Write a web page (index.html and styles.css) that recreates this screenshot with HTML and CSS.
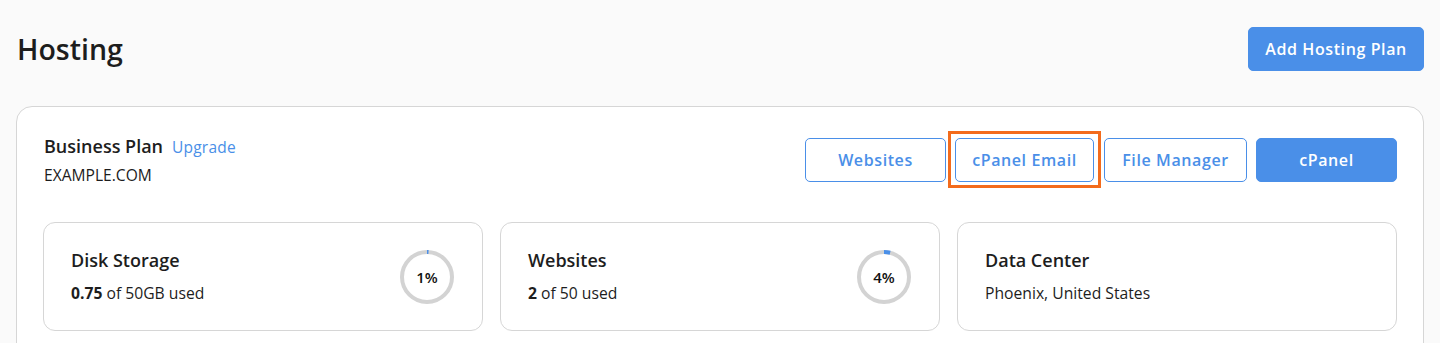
FILE: index.html
```html
<!DOCTYPE html>
<html>
<head>
<meta charset="utf-8">
<link rel="stylesheet" href="styles.css">
</head>
<body>
<div class="page">
  <header class="page-head">
    <h1 class="page-title">Hosting</h1>
    <button class="btn btn-solid btn-add">Add Hosting Plan</button>
  </header>
  <section class="plan-card">
    <div class="plan-top">
      <div class="plan-info">
        <div class="plan-name">Business Plan <a class="plan-upgrade">Upgrade</a></div>
        <div class="plan-domain">EXAMPLE.COM</div>
      </div>
      <div class="plan-actions">
        <button class="btn btn-outline btn-w141">Websites</button>
        <button class="btn btn-outline btn-w139 highlighted">cPanel Email</button>
        <button class="btn btn-outline btn-w143">File Manager</button>
        <button class="btn btn-solid btn-w141">cPanel</button>
      </div>
    </div>
    <div class="stats">
      <div class="stat">
        <div class="stat-text">
          <div class="stat-title">Disk Storage</div>
          <div class="stat-sub"><b>0.75</b> of 50GB used</div>
        </div>
        <div class="donut">
          <svg viewBox="0 0 54 54" width="54" height="54">
            <circle cx="27" cy="27" r="25" class="donut-track"/>
            <circle cx="27" cy="27" r="25" class="donut-bar" style="stroke-dasharray: 1.57 157.08"/>
          </svg>
          <span class="donut-label">1%</span>
        </div>
      </div>
      <div class="stat">
        <div class="stat-text">
          <div class="stat-title">Websites</div>
          <div class="stat-sub"><b>2</b> of 50 used</div>
        </div>
        <div class="donut">
          <svg viewBox="0 0 54 54" width="54" height="54">
            <circle cx="27" cy="27" r="25" class="donut-track"/>
            <circle cx="27" cy="27" r="25" class="donut-bar" style="stroke-dasharray: 6.28 157.08"/>
          </svg>
          <span class="donut-label">4%</span>
        </div>
      </div>
      <div class="stat">
        <div class="stat-text">
          <div class="stat-title">Data Center</div>
          <div class="stat-sub">Phoenix, United States</div>
        </div>
      </div>
    </div>
  </section>
</div>
</body>
</html>
```
FILE: styles.css
```css
* { box-sizing: border-box; }
html, body { margin: 0; padding: 0; }
body {
  background: #fafafa;
  font-family: "Open Sans", "Noto Sans", sans-serif;
  color: #1d1d1d;
}
.page { padding: 27px 16px 0 16px; }
.page-head {
  display: flex;
  align-items: center;
  justify-content: space-between;
  height: 44px;
}
.page-title {
  margin: 0;
  font-size: 28.5px;
  font-weight: 600;
  line-height: 40px;
  color: #1d1d1d;
  padding-left: 1px;
}
.btn {
  font-family: "Open Sans", "Noto Sans", sans-serif;
  font-size: 16px;
  font-weight: 600;
  letter-spacing: 0.6px;
  height: 44px;
  border-radius: 5px;
  cursor: pointer;
  padding: 0;
}
.btn-solid {
  background: #4a8fe8;
  border: 1px solid #4a8fe8;
  color: #fff;
}
.btn-outline {
  background: #fff;
  border: 1px solid #4a8fe8;
  color: #4a8fe8;
}
.btn-add { width: 176px; }
.btn-w141 { width: 141px; }
.btn-w139 { width: 139px; }
.btn-w143 { width: 143px; }
.highlighted { position: relative; }
.highlighted::after {
  content: "";
  position: absolute;
  left: -8px; right: -8px; top: -8px; bottom: -7px;
  border: 3px solid #f36b1c;
}
.plan-card {
  margin-top: 35px;
  background: #fff;
  border: 1px solid #d6d6d6;
  border-radius: 16px;
  padding: 28px 26px 40px 26px;
}
.plan-top {
  display: flex;
  justify-content: space-between;
  align-items: flex-start;
}
.plan-info { padding-left: 1px; }
.plan-name {
  font-size: 18px;
  font-weight: 600;
  line-height: 22px;
  display: flex;
  align-items: baseline;
  gap: 9px;
}
.plan-upgrade {
  font-size: 15.5px;
  font-weight: 400;
  color: #4a8fe8;
  letter-spacing: 0.2px;
}
.plan-domain {
  margin-top: 7px;
  font-size: 15.6px;
  line-height: 20px;
}
.plan-actions {
  display: flex;
  gap: 9px;
  margin-top: 3px;
}
.plan-actions .btn-w139 { margin-right: 1px; }
.stats {
  margin-top: 37px;
  display: grid;
  grid-template-columns: repeat(3, 1fr);
  gap: 17px;
}
.stat {
  background: #fff;
  border: 1px solid #d6d6d6;
  border-radius: 12px;
  height: 109px;
  padding: 0 28px 2px 27px;
  display: flex;
  align-items: center;
  justify-content: space-between;
}
.stat-title {
  font-size: 18px;
  font-weight: 600;
  line-height: 24px;
}
.stat-sub {
  margin-top: 10px;
  font-size: 15.7px;
  line-height: 22px;
}
.stat-sub b { font-weight: 700; }
.donut {
  position: relative;
  width: 54px;
  height: 54px;
  margin-top: 2px;
  display: flex;
  align-items: center;
  justify-content: center;
}
.donut svg {
  position: absolute;
  left: 0; top: 0;
  transform: rotate(-90deg);
}
.donut-track {
  fill: none;
  stroke: #d3d3d3;
  stroke-width: 4;
}
.donut-bar {
  fill: none;
  stroke: #4a8fe8;
  stroke-width: 4;
}
.donut-label {
  position: relative;
  font-size: 15px;
  font-weight: 600;
  color: #111;
}
```
